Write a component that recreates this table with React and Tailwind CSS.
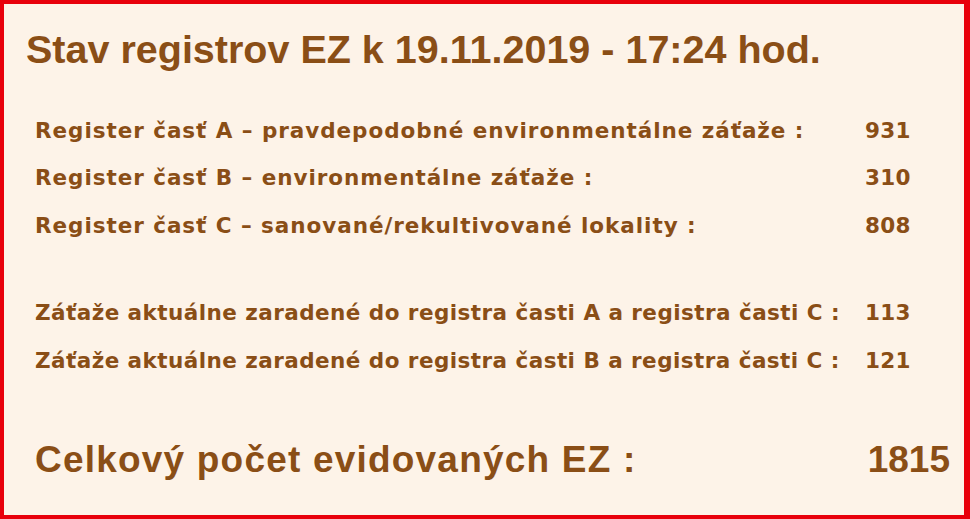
export default function App() {
  const rows = [
    ["Register časť A – pravdepodobné environmentálne záťaže :", "931"],
    ["Register časť B – environmentálne záťaže :", "310"],
    ["Register časť C – sanované/rekultivované lokality :", "808"],
  ];
  const rows2 = [
    ["Záťaže aktuálne zaradené do registra časti A a registra časti C :", "113"],
    ["Záťaže aktuálne zaradené do registra časti B a registra časti C :", "121"],
  ];

  return (
    <div className="w-[970px] h-[519px] bg-[#fdf3e8] border-4 border-[#e8000b] border-r-[6px] text-[#8a4e16] overflow-hidden">
      <h1 className="pl-[22px] pt-[21px] text-[39.5px] leading-[48px] font-bold font-['Liberation_Sans',Arial,sans-serif] whitespace-nowrap">
        Stav registrov EZ k 19.11.2019 - 17:24 hod.
      </h1>

      <div className="mt-[34px] pl-[31px] font-['DejaVu_Sans',Verdana,sans-serif] font-bold text-[21.5px] whitespace-nowrap">
        {rows.map(([label, value]) => (
          <div key={value} className="flex h-[47.5px] items-center">
            <span className="w-[830px] shrink-0 tracking-[0.95px]">{label}</span>
            <span className="tracking-[0.3px]">{value}</span>
          </div>
        ))}
        <div className="h-[40px]" />
        {rows2.map(([label, value]) => (
          <div key={value} className="flex h-[47.5px] items-center">
            <span className="w-[830px] shrink-0 tracking-[0.45px]">{label}</span>
            <span className="tracking-[0.3px]">{value}</span>
          </div>
        ))}
      </div>

      <div className="mt-[55px] pl-[31px] pr-[14px] flex justify-between items-center font-['Liberation_Sans',Arial,sans-serif] font-bold text-[37px] leading-[40px] whitespace-nowrap">
        <span className="tracking-[1.2px]">Celkový počet evidovaných EZ :</span>
        <span>1815</span>
      </div>
    </div>
  );
}
